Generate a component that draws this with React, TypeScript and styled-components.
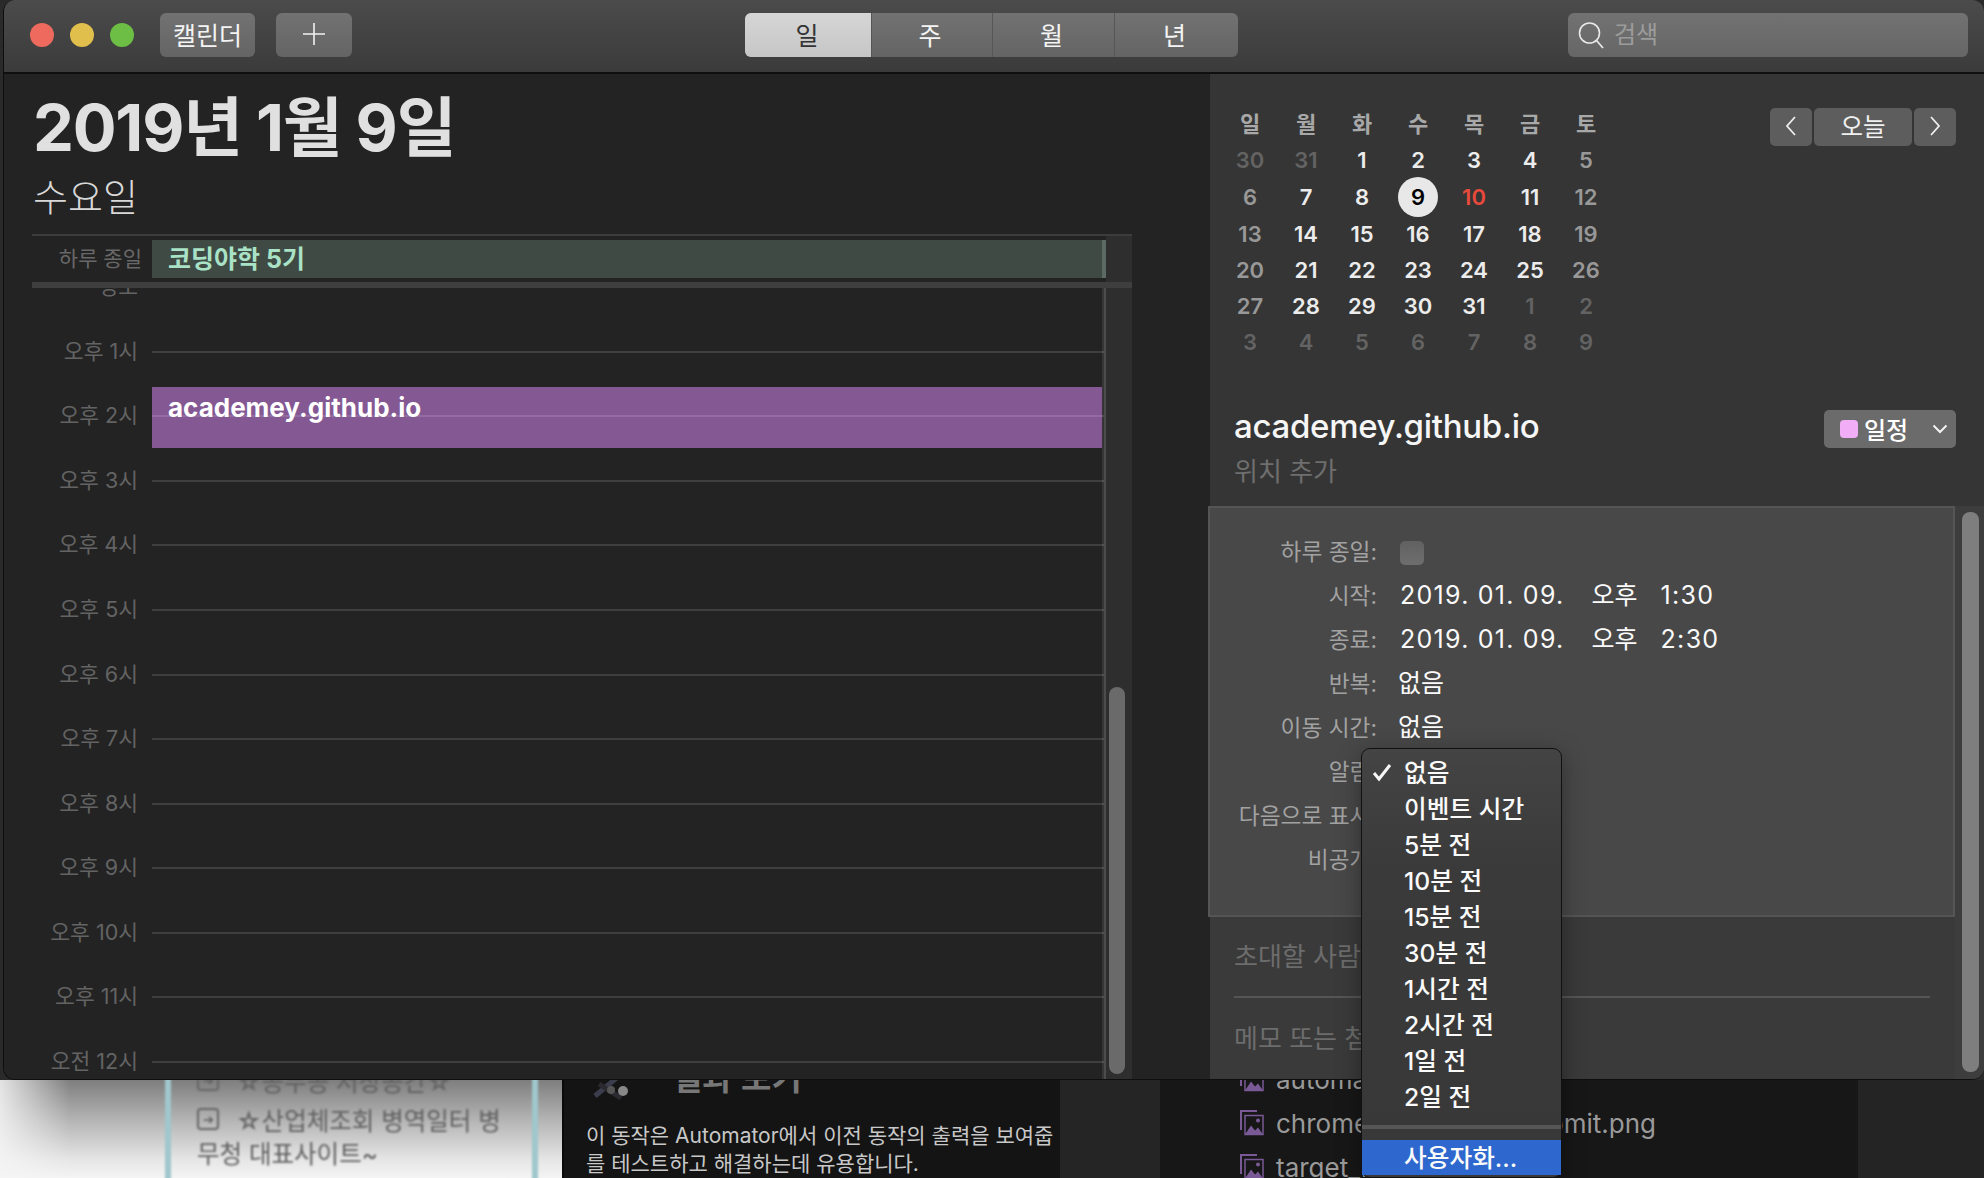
import React from "react";
import styled, { createGlobalStyle } from "styled-components";

const Global = createGlobalStyle`
  html, body { margin: 0; padding: 0; background: #262626; }
  body { font-family: Inter, "Noto Sans CJK KR", sans-serif; }
  * { box-sizing: border-box; }
`;

const Desktop = styled.div`
  position: relative;
  width: 1984px;
  height: 1178px;
  overflow: hidden;
  display: flex;
  flex-direction: column;
  background: #2a2a2a;
`;

const Window = styled.div`
  margin-left: 3px;
  height: 1080px;
  flex: none;
  display: flex;
  flex-direction: column;
  border: 1px solid #0e0e0e;
  border-top: none;
  border-right: none;
  border-radius: 12px 12px 12px 12px;
  overflow: hidden;
  position: relative;
  z-index: 2;
`;

const TitleBar = styled.header`
  height: 74px;
  flex: none;
  display: flex;
  align-items: center;
  padding: 0 16px 2px 26px;
  background: linear-gradient(#4b4b4b, #3b3b3b);
  border-bottom: 2px solid #0f0f0f;
`;

const Lights = styled.div`
  display: flex;
  gap: 16px;
  margin-right: 26px;
`;

const Light = styled.span<{ $c: string }>`
  width: 24px;
  height: 24px;
  border-radius: 50%;
  background: ${(p) => p.$c};
`;

const ToolButton = styled.div<{ $w: number }>`
  width: ${(p) => p.$w}px;
  height: 44px;
  margin-right: 21px;
  padding-bottom: 2px;
  border-radius: 6px;
  display: flex;
  align-items: center;
  justify-content: center;
  color: #f4f4f4;
  font-size: 25px;
  background: linear-gradient(#727272, #646464);
`;

const Segments = styled.div`
  margin-left: 372px;
  width: 493px;
  height: 44px;
  display: flex;
  border-radius: 6px;
  overflow: hidden;
  background: linear-gradient(#727272, #646464);
`;

const Segment = styled.div<{ $w: number; $on?: boolean }>`
  width: ${(p) => p.$w}px;
  padding: 0 ${(p) => (p.$on ? 2 : 4)}px 2px 0;
  display: flex;
  align-items: center;
  justify-content: center;
  font-size: 25px;
  color: ${(p) => (p.$on ? "#333" : "#f4f4f4")};
  background: ${(p) => (p.$on ? "linear-gradient(#d6d6d6, #c6c6c6)" : "transparent")};
  & + & {
    border-left: 1px solid ${(p) => (p.$on ? "transparent" : "#565656")};
  }
`;

const Search = styled.div`
  margin-left: auto;
  width: 400px;
  height: 44px;
  border-radius: 6px;
  display: flex;
  align-items: center;
  gap: 10px;
  padding-left: 10px;
  font-size: 24px;
  color: #9c9c9c;
  background: linear-gradient(#727272, #666);
`;

const SearchText = styled.span`
  margin-top: -5px;
`;

const Body = styled.div`
  flex: 1;
  min-height: 0;
  display: flex;
`;

const DayPanel = styled.section`
  width: 1206px;
  flex: none;
  display: flex;
  flex-direction: column;
  padding: 0 78px 0 28px;
  background: #232323;
`;

const DayHeading = styled.div`
  height: 160px;
  flex: none;
  padding: 19px 0 0 1px;
`;

const DayTitle = styled.h1`
  margin: 0;
  font-size: 65px;
  line-height: 70px;
  font-weight: 700;
  letter-spacing: -1.2px;
  color: #e0e0e0;
`;

const DaySub = styled.div`
  margin-top: 12px;
  font-size: 38px;
  line-height: 44px;
  font-weight: 300;
  color: #d8d8d8;
`;

const AllDay = styled.div`
  flex: none;
  height: 54px;
  display: flex;
  border-top: 2px solid #3c3c3c;
  border-bottom: 6px solid #3e3e3e;
`;

const AllDayLabel = styled.div`
  width: 120px;
  flex: none;
  padding-right: 10px;
  text-align: right;
  font-size: 21px;
  line-height: 45px;
  color: #686868;
  white-space: nowrap;
`;

const AllDayTrack = styled.div`
  width: 954px;
  flex: none;
  padding: 4px 0;
`;

const AllDayEvent = styled.div`
  height: 38px;
  padding-left: 16px;
  border-right: 4px solid #5b6a62;
  background: #3f4a44;
  color: #a9e2c6;
  font-size: 25px;
  line-height: 38px;
  font-weight: 700;
`;

const Gutter = styled.div`
  flex: 1;
  display: flex;
  flex-direction: column;
  justify-content: flex-end;
  padding: 0 7px 5px 3px;
  background: #2e2e2e;
`;

const GutterThumb = styled.div`
  height: 387px;
  border-radius: 8px;
  background: #6a6a6a;
`;

const TimeArea = styled.div`
  flex: 1;
  min-height: 0;
  display: flex;
  overflow: hidden;
`;

const Timeline = styled.div`
  position: relative;
  width: 1074px;
  flex: none;
  overflow: hidden;
  border-right: 2px solid #4c4c4c;
  box-shadow: inset -2px 0 0 #363636;
`;

const Hours = styled.div`
  margin-top: -33px;
`;

const HourRow = styled.div`
  position: relative;
  z-index: 1;
  height: 64.55px;
  display: flex;
  align-items: center;
`;

const HourLabel = styled.div`
  width: 106px;
  flex: none;
  margin-right: 14px;
  text-align: right;
  font-size: 21.5px;
  line-height: 24px;
  margin-top: -2px;
  color: #636363;
  white-space: nowrap;
`;

const HourLine = styled.div`
  flex: 1;
  height: 2px;
  background: rgba(255, 255, 255, 0.13);
`;

const TimedEvent = styled.div`
  position: absolute;
  top: 99px;
  left: 120px;
  right: 2px;
  height: 61px;
  padding: 1px 0 0 16px;
  background: #835893;
  color: #fff;
  font-size: 26px;
  line-height: 40px;
  font-weight: 700;
`;

const SidePanel = styled.section`
  flex: 1;
  min-width: 0;
  display: flex;
  flex-direction: column;
  background: #353535;
`;

const SideTop = styled.div`
  height: 432px;
  flex: none;
`;

const CalRow = styled.div`
  display: flex;
  justify-content: space-between;
  padding: 32px 28px 0 12px;
`;

const MiniCal = styled.div`
  display: grid;
  grid-template-columns: repeat(7, 56px);
  grid-template-rows: 36px 36px 38px 36px 36px 36px 36px;
`;

const DayCell = styled.div<{ $kind: string }>`
  display: flex;
  align-items: center;
  justify-content: center;
  padding-bottom: ${(p) => (p.$kind === "head" ? 5 : 0)}px;
  font-size: 22px;
  font-weight: 600;
  color: ${(p) =>
    ({ head: "#a8a8a8", out: "#636363", end: "#989898", day: "#ececec", today: "#e8493b", sel: "#000" } as Record<string, string>)[p.$kind]};
`;

const SelDot = styled.span`
  width: 40px;
  height: 40px;
  flex: none;
  border-radius: 50%;
  display: flex;
  align-items: center;
  justify-content: center;
  background: #e8e8e8;
`;

const Nav = styled.div`
  display: flex;
  gap: 2px;
  margin-top: 2px;
  height: 38px;
`;

const NavButton = styled.div<{ $w: number }>`
  width: ${(p) => p.$w}px;
  padding-bottom: 3px;
  border-radius: 5px;
  display: flex;
  align-items: center;
  justify-content: center;
  color: #f0f0f0;
  font-size: 24.5px;
  background: #5d5d5d;
`;

const EventRow = styled.div`
  margin-top: 50px;
  height: 38px;
  padding: 0 28px 0 24px;
  display: flex;
  align-items: center;
  justify-content: space-between;
`;

const EventTitle = styled.div`
  padding-bottom: 6px;
  font-size: 33px;
  font-weight: 500;
  letter-spacing: -0.3px;
  color: #f6f6f6;
`;

const CalPicker = styled.div`
  width: 132px;
  height: 38px;
  border-radius: 5px;
  display: flex;
  align-items: center;
  padding: 0 8px 0 16px;
  background: #6b6b6b;
  color: #fff;
  font-size: 24px;
  font-weight: 500;
`;

const Swatch = styled.span`
  width: 18px;
  height: 18px;
  margin-right: 6px;
  border-radius: 4px;
  background: #f1aef6;
`;

const PickerChevron = styled.svg`
  margin-left: auto;
`;

const PickerText = styled.span`
  margin-top: -2px;
`;

const Location = styled.div`
  margin-top: 8px;
  padding-left: 24px;
  font-size: 26px;
  line-height: 32px;
  color: #6e6e6e;
`;

const SideScroll = styled.div`
  flex: 1;
  min-height: 0;
  display: flex;
`;

const SideMain = styled.div`
  width: 745px;
  flex: none;
  display: flex;
  flex-direction: column;
`;

const DetailBox = styled.div`
  height: 411px;
  flex: none;
  margin-left: -2px;
  padding-top: 22px;
  border: 2px solid #555;
  background: #484848;
`;

const FieldRow = styled.div`
  height: 44px;
  display: flex;
  align-items: center;
`;

const FieldLabel = styled.div`
  width: 167px;
  flex: none;
  margin-right: 23px;
  padding-bottom: 4px;
  text-align: right;
  font-size: 22.7px;
  color: #a2a2a2;
  white-space: nowrap;
`;

const FieldValue = styled.div`
  display: flex;
  align-items: center;
  gap: 8px;
  margin-top: -2px;
  font-size: 25px;
  letter-spacing: 1.3px;
  color: #fafafa;
`;

const TimePart = styled.span<{ $gap: number; $kr?: boolean }>`
  margin-left: ${(p) => p.$gap}px;
  margin-top: ${(p) => (p.$kr ? -5 : 0)}px;
  letter-spacing: ${(p) => (p.$kr ? 0 : 1.3)}px;
`;

const PlainValue = styled.div`
  margin: -6px 0 0 -2px;
  font-size: 25px;
  color: #fafafa;
`;

const CheckBox = styled.span`
  width: 24px;
  height: 24px;
  margin-top: 2px;
  border-radius: 5px;
  background: linear-gradient(#616161, #6e6e6e);
`;

const Lower = styled.div`
  flex: 1;
  padding: 0 25px 0 24px;
  background: #3a3a3a;
`;

const LowerField = styled.div<{ $line?: boolean }>`
  height: ${(p) => (p.$line ? 81 : 80)}px;
  padding-bottom: 4px;
  display: flex;
  align-items: center;
  font-size: 26px;
  color: #6c6c6c;
  white-space: nowrap;
  border-bottom: ${(p) => (p.$line ? "2px solid #555" : "none")};
`;

const SideTrack = styled.div`
  flex: 1;
  display: flex;
  padding: 6px 5px 7px 7px;
  background: #3d3d3d;
`;

const SideThumb = styled.div`
  flex: 1;
  border-radius: 8px;
  background: #7e7e7e;
`;

const Menu = styled.div`
  position: absolute;
  z-index: 5;
  left: 1361px;
  top: 748px;
  width: 201px;
  height: 430px;
  padding-top: 5px;
  border: 1px solid #111;
  border-radius: 9px;
  background: linear-gradient(#444 0, #3a3a3a 120px, #383838 100%);
  box-shadow: 0 6px 24px rgba(0, 0, 0, 0.35);
`;

const MenuItem = styled.div`
  position: relative;
  height: 36px;
  padding: 0 0 3px 42px;
  display: flex;
  align-items: center;
  color: #fafafa;
  font-size: 24.7px;
  font-weight: 500;
  white-space: nowrap;
`;

const MenuCheck = styled.svg`
  position: absolute;
  left: 10px;
  top: 8px;
`;

const MenuSep = styled.div`
  height: 4px;
  margin-top: 11px;
  background: #565656;
`;

const MenuActive = styled(MenuItem)`
  height: 35px;
  margin-top: 11px;
  background: #2e67cd;
`;

const Behind = styled.div`
  flex: 1;
  min-height: 0;
  display: flex;
  overflow: hidden;
`;

const PageSide = styled.div`
  width: 562px;
  flex: none;
  padding-left: 165px;
  padding-right: 24px;
  background: linear-gradient(90deg, rgba(245, 245, 245, 0.85) 0, rgba(245, 245, 245, 0) 70px),
    linear-gradient(#7e7e7e 0, #b4b4b4 40px, #e6e6e6 80px, #f4f4f4 98px);
`;

const PageCard = styled.div`
  margin-top: -22px;
  height: 130px;
  padding: 0 0 0 26px;
  border: solid #9fc7cc;
  border-width: 0 6px;
  color: #606060;
  font-size: 24.5px;
  filter: blur(0.8px);
`;

const PageLine = styled.div<{ $h: number }>`
  height: ${(p) => p.$h}px;
  display: flex;
  align-items: center;
  white-space: nowrap;
`;

const LinkIcon = styled.span`
  width: 22px;
  height: 22px;
  margin-right: 17px;
  border: 2px solid #666;
  border-radius: 4px;
  display: flex;
  align-items: center;
  justify-content: center;
  font-size: 13px;
`;

const DocPanel = styled.div`
  width: 498px;
  flex: none;
  padding-left: 22px;
  overflow: hidden;
  border-left: 2px solid #0a0a0a;
  background: #141414;
`;

const DocHead = styled.div`
  height: 40px;
  margin-top: -18px;
  padding-left: 7px;
  display: flex;
  align-items: center;
  gap: 35px;
  color: #777;
  font-size: 33px;
  font-weight: 600;
  white-space: nowrap;
`;

const DocHeadText = styled.span`
  margin-top: -12px;
`;

const DocText = styled.div`
  margin-top: 20px;
  color: #c8c8c8;
  font-size: 21px;
  line-height: 28px;
  white-space: nowrap;
`;

const Strip = styled.div`
  width: 100px;
  flex: none;
  background: #252525;
`;

const FileList = styled.div`
  width: 698px;
  flex: none;
  padding-left: 80px;
  margin-top: -23px;
  background: #171717;
`;

const FileRow = styled.div`
  height: 44px;
  display: flex;
  align-items: center;
  gap: 12px;
  color: #9a9a9a;
  font-size: 26px;
  white-space: nowrap;
`;

const Tail = styled.div`
  flex: 1;
  background: #242424;
`;

const FileIcon = () => (
  <svg width="24" height="26" viewBox="0 0 24 26">
    <path d="M1 20V1h16" fill="none" stroke="#7a5a96" strokeWidth="2" />
    <rect x="5" y="5.5" width="18" height="19" fill="none" stroke="#7a5a96" strokeWidth="1.5" />
    <path d="M5 24.5l6-9 4 5 3-3 5 7z" fill="#7a5a96" />
    <circle cx="18" cy="10.5" r="2" fill="#7a5a96" />
  </svg>
);

const ToolsIcon = () => (
  <svg width="44" height="36" viewBox="0 0 44 36">
    <path d="M2 32L38 2" stroke="#3b3d4c" strokeWidth="5" />
    <path d="M6 20l22 14" stroke="#2a2a30" strokeWidth="5" />
    <circle cx="30" cy="27" r="5" fill="#888" />
    <circle cx="18" cy="26" r="4" fill="#555" />
  </svg>
);

const weekdays = ["일", "월", "화", "수", "목", "금", "토"];
const monthDays: [string, string][] = [
  ["30", "out"], ["31", "out"], ["1", "day"], ["2", "day"], ["3", "day"], ["4", "day"], ["5", "end"],
  ["6", "end"], ["7", "day"], ["8", "day"], ["9", "sel"], ["10", "today"], ["11", "day"], ["12", "end"],
  ["13", "end"], ["14", "day"], ["15", "day"], ["16", "day"], ["17", "day"], ["18", "day"], ["19", "end"],
  ["20", "end"], ["21", "day"], ["22", "day"], ["23", "day"], ["24", "day"], ["25", "day"], ["26", "end"],
  ["27", "end"], ["28", "day"], ["29", "day"], ["30", "day"], ["31", "day"], ["1", "out"], ["2", "out"],
  ["3", "out"], ["4", "out"], ["5", "out"], ["6", "out"], ["7", "out"], ["8", "out"], ["9", "out"],
];

const hours = ["정오", "오후 1시", "오후 2시", "오후 3시", "오후 4시", "오후 5시", "오후 6시", "오후 7시", "오후 8시", "오후 9시", "오후 10시", "오후 11시", "오전 12시", "오전 1시"];

const alerts = ["없음", "이벤트 시간", "5분 전", "10분 전", "15분 전", "30분 전", "1시간 전", "2시간 전", "1일 전", "2일 전"];

const DateTime = ({ time }: { time: string }) => (
  <FieldValue>
    <span>2019.</span>
    <span>01.</span>
    <span>09.</span>
    <TimePart $gap={19} $kr>오후</TimePart>
    <TimePart $gap={15}>{time}</TimePart>
  </FieldValue>
);

export default function App() {
  return (
    <Desktop>
      <Global />
      <Window>
        <TitleBar>
          <Lights>
            <Light $c="#ee6a5e" />
            <Light $c="#e0bf4c" />
            <Light $c="#6cbe45" />
          </Lights>
          <ToolButton $w={95}>캘린더</ToolButton>
          <ToolButton $w={76}>
            <svg width="24" height="24" viewBox="0 0 24 24">
              <path d="M12 1v22M1 12h22" stroke="#f2f2f2" strokeWidth="1.6" />
            </svg>
          </ToolButton>
          <Segments>
            <Segment $w={126} $on>일</Segment>
            <Segment $w={121}>주</Segment>
            <Segment $w={122}>월</Segment>
            <Segment $w={124}>년</Segment>
          </Segments>
          <Search>
            <svg width="26" height="28" viewBox="0 0 26 28">
              <circle cx="11.5" cy="12" r="10" fill="none" stroke="#e8e8e8" strokeWidth="1.6" />
              <path d="M18.5 19.5L25 27" stroke="#e8e8e8" strokeWidth="1.8" />
            </svg>
            <SearchText>검색</SearchText>
          </Search>
        </TitleBar>
        <Body>
          <DayPanel>
            <DayHeading>
              <DayTitle>2019년 1월 9일</DayTitle>
              <DaySub>수요일</DaySub>
            </DayHeading>
            <AllDay>
              <AllDayLabel>하루 종일</AllDayLabel>
              <AllDayTrack>
                <AllDayEvent>코딩야학 5기</AllDayEvent>
              </AllDayTrack>
              <Gutter />
            </AllDay>
            <TimeArea>
              <Timeline>
                <TimedEvent>academey.github.io</TimedEvent>
                <Hours>
                  {hours.map((h) => (
                    <HourRow key={h}>
                      <HourLabel>{h}</HourLabel>
                      <HourLine />
                    </HourRow>
                  ))}
                </Hours>
              </Timeline>
              <Gutter>
                <GutterThumb />
              </Gutter>
            </TimeArea>
          </DayPanel>
          <SidePanel>
            <SideTop>
              <CalRow>
                <MiniCal>
                  {weekdays.map((d) => (
                    <DayCell key={d} $kind="head">{d}</DayCell>
                  ))}
                  {monthDays.map(([d, k], i) => (
                    <DayCell key={i} $kind={k}>
                      {k === "sel" ? <SelDot>{d}</SelDot> : d}
                    </DayCell>
                  ))}
                </MiniCal>
                <Nav>
                  <NavButton $w={42}>
                    <svg width="12" height="22" viewBox="0 0 12 22">
                      <path d="M10 2L2 11l8 9" fill="none" stroke="#eee" strokeWidth="1.8" />
                    </svg>
                  </NavButton>
                  <NavButton $w={98}>오늘</NavButton>
                  <NavButton $w={42}>
                    <svg width="12" height="22" viewBox="0 0 12 22">
                      <path d="M2 2l8 9-8 9" fill="none" stroke="#eee" strokeWidth="1.8" />
                    </svg>
                  </NavButton>
                </Nav>
              </CalRow>
              <EventRow>
                <EventTitle>academey.github.io</EventTitle>
                <CalPicker>
                  <Swatch />
                  <PickerText>일정</PickerText>
                  <PickerChevron width="16" height="10" viewBox="0 0 16 10">
                    <path d="M1.5 1.5L8 8l6.5-6.5" fill="none" stroke="#f2f2f2" strokeWidth="2" />
                  </PickerChevron>
                </CalPicker>
              </EventRow>
              <Location>위치 추가</Location>
            </SideTop>
            <SideScroll>
              <SideMain>
                <DetailBox>
                  <FieldRow>
                    <FieldLabel>하루 종일:</FieldLabel>
                    <CheckBox />
                  </FieldRow>
                  <FieldRow>
                    <FieldLabel>시작:</FieldLabel>
                    <DateTime time="1:30" />
                  </FieldRow>
                  <FieldRow>
                    <FieldLabel>종료:</FieldLabel>
                    <DateTime time="2:30" />
                  </FieldRow>
                  <FieldRow>
                    <FieldLabel>반복:</FieldLabel>
                    <PlainValue>없음</PlainValue>
                  </FieldRow>
                  <FieldRow>
                    <FieldLabel>이동 시간:</FieldLabel>
                    <PlainValue>없음</PlainValue>
                  </FieldRow>
                  <FieldRow>
                    <FieldLabel>알림:</FieldLabel>
                  </FieldRow>
                  <FieldRow>
                    <FieldLabel>다음으로 표시:</FieldLabel>
                  </FieldRow>
                  <FieldRow>
                    <FieldLabel>비공개:</FieldLabel>
                  </FieldRow>
                </DetailBox>
                <Lower>
                  <LowerField $line>초대할 사람 추가</LowerField>
                  <LowerField>메모 또는 첨부</LowerField>
                </Lower>
              </SideMain>
              <SideTrack>
                <SideThumb />
              </SideTrack>
            </SideScroll>
          </SidePanel>
        </Body>
      </Window>
      <Behind>
        <PageSide>
          <PageCard>
            <PageLine $h={44}>
              <LinkIcon>➔</LinkIcon>☆공무공 저장공간☆
            </PageLine>
            <PageLine $h={34}>
              <LinkIcon>➔</LinkIcon>☆산업체조회 병역일터 병
            </PageLine>
            <PageLine $h={32}>무청 대표사이트~</PageLine>
          </PageCard>
        </PageSide>
        <DocPanel>
          <DocHead>
            <ToolsIcon />
            <DocHeadText>결과 보기</DocHeadText>
          </DocHead>
          <DocText>
            이 동작은 Automator에서 이전 동작의 출력을 보여줍
            <br />를 테스트하고 해결하는데 유용합니다.
          </DocText>
        </DocPanel>
        <Strip />
        <FileList>
          <FileRow>
            <FileIcon />
            automator_result.png
          </FileRow>
          <FileRow>
            <FileIcon />
            chrome_web_store_submit.png
          </FileRow>
          <FileRow>
            <FileIcon />
            target_blank.png
          </FileRow>
        </FileList>
        <Tail />
      </Behind>
      <Menu>
        {alerts.map((a, i) => (
          <MenuItem key={a}>
            {i === 0 && (
              <MenuCheck width="20" height="20" viewBox="0 0 20 20">
                <path d="M2 11l5 6L18 3" fill="none" stroke="#f6f6f6" strokeWidth="3" />
              </MenuCheck>
            )}
            {a}
          </MenuItem>
        ))}
        <MenuSep />
        <MenuActive>사용자화...</MenuActive>
      </Menu>
    </Desktop>
  );
}
